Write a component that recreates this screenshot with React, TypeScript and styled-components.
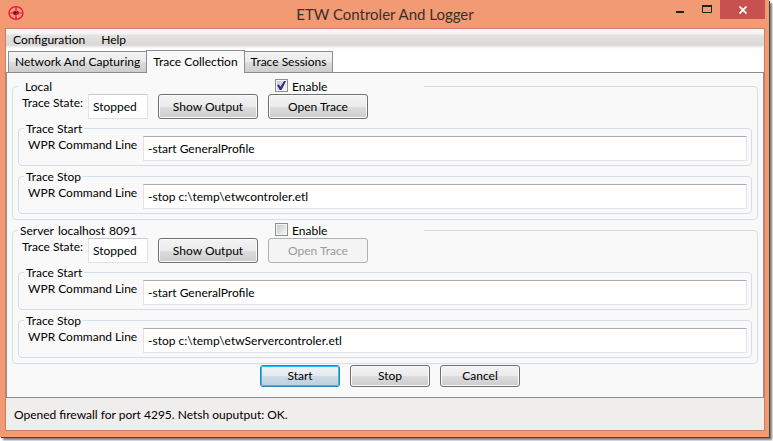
import React, { useId, useState } from "react";
import styled, { createGlobalStyle } from "styled-components";

const GlobalStyle = createGlobalStyle`
  *, *::before, *::after { box-sizing: border-box; }
  body {
    margin: 0;
    background: #fff;
    color: #000;
    font: 12px/16px Lato, "Open Sans", sans-serif;
  }
  button, input { font: inherit; color: inherit; margin: 0; }
`;

const Desktop = styled.div`
  display: flex;
  min-height: 100vh;
  padding: 0 4px 4px 0;
`;

const Window = styled.div`
  flex: 1;
  min-width: 0;
  display: flex;
  flex-direction: column;
  padding: 0 4px 6px 5px;
  background: #f19a74;
  box-shadow: 1px 1px 0 #444, 3px 3px 2px #777;
`;

const TitleBar = styled.header`
  display: flex;
  align-items: flex-start;
  height: 28px;
`;

const AppIcon = styled.svg`
  flex: none;
  width: 16px;
  height: 16px;
  margin: 5px 0 0 3px;
`;

const Title = styled.h1`
  flex: 1;
  margin: 0;
  padding-left: 80px;
  font-size: 15px;
  font-weight: 400;
  line-height: 28px;
  text-align: center;
  color: #3c2f2a;
`;

const CaptionButton = styled.button<{ $close?: boolean }>`
  width: ${(p) => (p.$close ? 45 : 27)}px;
  height: ${(p) => (p.$close ? 19 : 20)}px;
  padding: 0;
  border: 0;
  display: grid;
  place-items: center;
  background: ${(p) => (p.$close ? "#c75050" : "transparent")};
`;

const Client = styled.div`
  flex: 1;
  display: flex;
  flex-direction: column;
  border: 1px solid #cc7f62;
  background: #fff;
`;

const MenuBar = styled.nav`
  display: flex;
  gap: 16px;
  height: 20px;
  padding: 3px 7px 0;
  background: linear-gradient(#fafafa 0, #f3f3f3 5px, #e5e3e2 6px, #d9d8d6 16px, #f0f0f0 18px, #fff 20px);
`;

const MenuItem = styled.button`
  padding: 0;
  border: 0;
  height: 16px;
  background: none;
`;

const TabStrip = styled.div`
  display: flex;
  align-items: flex-end;
  height: 23px;
  padding: 0 2px;
`;

const Tab = styled.button<{ $selected?: boolean }>`
  height: ${(p) => (p.$selected ? 23 : 21)}px;
  margin-right: -1px;
  padding: 0 6px;
  position: relative;
  z-index: ${(p) => (p.$selected ? 1 : 0)};
  margin-bottom: ${(p) => (p.$selected ? -1 : 0)}px;
  border: 1px solid #8c8e94;
  border-bottom: 0;
  white-space: nowrap;
  background: ${(p) =>
    p.$selected ? "#f9f9f9" : "linear-gradient(#f3f3f3, #ebebeb 50%, #dddddd 50%, #cdcdcd)"};
`;

const Page = styled.main`
  flex: 1;
  display: flex;
  flex-direction: column;
  gap: 2px;
  padding: 5px;
  border: 1px solid #8c8e94;
  background: #f9f9f9;
`;

const Group = styled.fieldset`
  min-width: 0;
  margin: 0;
  padding: 0 5px 5px;
  border: 1px solid #d5dfe5;
  border-radius: 4px;
`;

const CommandGroup = styled(Group)`
  margin-top: 1px;
  padding: 0 4px 4px;

  & + & {
    margin-top: 2px;
  }
`;

const HostLegend = styled.legend`
  display: grid;
  grid-template-columns: 257px 149px;
  height: 16px;
  line-height: 18px;
  padding: 0;
  background: #f9f9f9;
`;

const HostName = styled.span<{ $indent: number }>`
  display: flex;
  gap: 4px;
  padding-left: ${(p) => p.$indent}px;
`;

const EnableLabel = styled.label`
  display: flex;
  gap: 4px;
`;

const CheckBox = styled.input`
  appearance: none;
  width: 13px;
  height: 13px;
  margin-top: 1px;
  border: 1px solid #8e8f8f;
  background: linear-gradient(135deg, #c8ccd2, #f4f4f4) content-box, #f4f4f4;
  padding: 1px;
  display: grid;
  place-items: center;

  &:checked::after {
    content: "";
    width: 9px;
    height: 9px;
    background: #2b2f86;
    clip-path: polygon(0 45%, 22% 40%, 38% 65%, 78% 0, 100% 0, 50% 100%, 30% 100%);
  }
`;

const StateRow = styled.div`
  display: flex;
  gap: 10px;
  align-items: flex-start;
`;

const StateField = styled.label`
  display: grid;
  grid-template-columns: 66px 60px;
  padding-left: 4px;
  line-height: 18px;
  white-space: nowrap;
`;

const TextBox = styled.input`
  width: 100%;
  min-width: 0;
  height: 25px;
  padding: 0 4px;
  border: 1px solid #e2e3ea;
  border-top-color: #abadb3;
  background: #fff;
`;

const StateBox = styled(TextBox)`
  border-top-color: #c8ccd2;
`;

const PushButton = styled.button<{ $small?: boolean; $primary?: boolean }>`
  width: ${(p) => (p.$small ? 80 : 100)}px;
  height: ${(p) => (p.$small ? 22 : 25)}px;
  padding: 0;
  border: 1px solid ${(p) => (p.$primary ? "#3c7fb1" : "#707070")};
  border-radius: 3px;
  background: ${(p) =>
    p.$primary
      ? "linear-gradient(#f0f3f5, #e3ebf0 50%, #cfdde6 50%, #bcd0dd)"
      : "linear-gradient(#f3f3f3, #ebebeb 50%, #dddddd 50%, #cdcdcd)"};
  box-shadow: inset 0 0 0 1px ${(p) => (p.$primary ? "#1fc4f5" : "#fbfbfb")};

  &:disabled {
    border-color: #adb2b5;
    background: #f4f4f4;
    box-shadow: none;
    color: #9a9a9a;
  }
`;

const CommandLegend = styled.legend`
  margin-left: 1px;
  height: 16px;
  line-height: 18px;
  padding: 0 2px;
  background: #f9f9f9;
`;

const CommandField = styled.label`
  display: grid;
  grid-template-columns: 115px 1fr;
  padding-left: 5px;
  line-height: 18px;
  white-space: nowrap;
`;

const Actions = styled.div`
  display: flex;
  justify-content: center;
  gap: 10px;
  margin: -1px 0 5px 10px;
`;

const StatusBar = styled.footer`
  padding: 9px 8px 7px;
  background: #f0eded;
`;

function Command({ title, value }: { title: string; value: string }) {
  const id = useId();
  return (
    <CommandGroup>
      <CommandLegend>{title}</CommandLegend>
      <CommandField htmlFor={id}>
        WPR Command Line
        <TextBox id={id} defaultValue={value} />
      </CommandField>
    </CommandGroup>
  );
}

interface HostProps {
  name: string[];
  indent: number;
  enabled: boolean;
  stopCommand: string;
}

function Host({ name, indent, enabled, stopCommand }: HostProps) {
  const [on, setOn] = useState(enabled);
  return (
    <Group>
      <HostLegend>
        <HostName $indent={indent}>
          {name.map((part) => (
            <span key={part}>{part}</span>
          ))}
        </HostName>
        <EnableLabel>
          <CheckBox type="checkbox" checked={on} onChange={(e) => setOn(e.target.checked)} />
          Enable
        </EnableLabel>
      </HostLegend>
      <StateRow>
        <StateField>
          Trace State:
          <StateBox readOnly value="Stopped" />
        </StateField>
        <PushButton type="button">Show Output</PushButton>
        <PushButton type="button" disabled={!on}>Open Trace</PushButton>
      </StateRow>
      <Command title="Trace Start" value="-start GeneralProfile" />
      <Command title="Trace Stop" value={stopCommand} />
    </Group>
  );
}

export default function App() {
  return (
    <>
      <GlobalStyle />
      <Desktop>
        <Window>
          <TitleBar>
            <AppIcon viewBox="0 0 16 16" fill="none" stroke="#f5103f" aria-hidden="true">
              <ellipse cx="8" cy="8" rx="7" ry="6.4" strokeWidth="1.3" />
              <path d="M5 6.5h6v3H5z" fill="#8c2430" stroke="none" />
              <path d="M8 1.5v13M1 8h14" strokeWidth="1.2" />
              <path d="M5.5 7.5h3M7 6v4M9.5 6v1" stroke="#40151c" />
            </AppIcon>
            <Title>ETW Controler And Logger</Title>
            <CaptionButton type="button" aria-label="Minimize">
              <svg width="8" height="20"><path d="M0 12h8" stroke="#222" strokeWidth="2" /></svg>
            </CaptionButton>
            <CaptionButton type="button" aria-label="Maximize">
              <svg width="10" height="20">
                <path d="M.5 5v7.5h9V5" fill="none" stroke="#222" />
                <path d="M0 6h10" stroke="#222" strokeWidth="2" />
              </svg>
            </CaptionButton>
            <CaptionButton type="button" $close aria-label="Close">
              <svg width="8" height="8"><path d="M.5.5l7 7M7.5.5l-7 7" stroke="#fff" strokeWidth="1.8" /></svg>
            </CaptionButton>
          </TitleBar>
          <Client>
            <MenuBar>
              <MenuItem type="button">Configuration</MenuItem>
              <MenuItem type="button">Help</MenuItem>
            </MenuBar>
            <TabStrip role="tablist">
              <Tab type="button" role="tab" aria-selected={false}>Network And Capturing</Tab>
              <Tab type="button" role="tab" aria-selected $selected>Trace Collection</Tab>
              <Tab type="button" role="tab" aria-selected={false}>Trace Sessions</Tab>
            </TabStrip>
            <Page role="tabpanel">
              <Host name={["Local"]} indent={7} enabled stopCommand="-stop c:\temp\etwcontroler.etl" />
              <Host
                name={["Server", "localhost", "8091"]}
                indent={2}
                enabled={false}
                stopCommand="-stop c:\temp\etwServercontroler.etl"
              />
              <Actions>
                <PushButton type="button" $small $primary>Start</PushButton>
                <PushButton type="button" $small>Stop</PushButton>
                <PushButton type="button" $small>Cancel</PushButton>
              </Actions>
            </Page>
            <StatusBar>Opened firewall for port 4295. Netsh ouputput: OK.</StatusBar>
          </Client>
        </Window>
      </Desktop>
    </>
  );
}
